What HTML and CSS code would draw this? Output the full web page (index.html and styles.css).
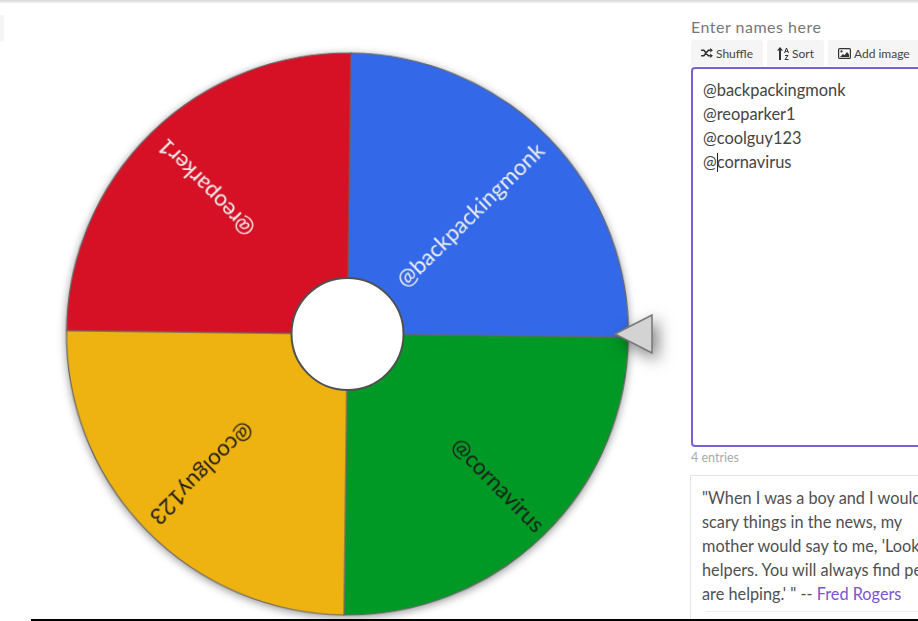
FILE: index.html

```html
<!DOCTYPE html>
<html lang="en">
<head>
  <meta charset="UTF-8" />
  <meta name="viewport" content="width=device-width, initial-scale=1.0"/>
  <title>Wheel of Names</title>
  <link rel="stylesheet" href="styles.css">
</head>
<body>
  <div class="top-bar"></div>

  <div class="main">
    <div class="wheel-column">
      <div class="side-tab"></div>

      <svg class="wheel" width="600" height="600" viewBox="0 0 600 600">
        <g class="wheel-disc" transform="translate(299.5 300) rotate(0.7)">
          <path class="slice" fill="#3369e8" d="M0 0V-281A281 281 0 0 1 281 0Z"/>
          <path class="slice" fill="#009925" d="M0 0H281A281 281 0 0 1 0 281Z"/>
          <path class="slice" fill="#eeb211" d="M0 0V281A281 281 0 0 1 -281 0Z"/>
          <path class="slice" fill="#d61126" d="M0 0H-281A281 281 0 0 1 0 -281Z"/>
          <text class="label label-light" transform="rotate(-45)" x="269" y="0">@backpackingmonk</text>
          <text class="label label-dark" transform="rotate(45)" x="274" y="-3">@cornavirus</text>
          <text class="label label-dark" transform="rotate(135)" x="269" y="1">@coolguy123</text>
          <text class="label label-light" transform="rotate(225)" x="267" y="0">@reoparker1</text>
        </g>
        <circle class="hub" cx="299.5" cy="300" r="56"/>
        <path class="pointer" d="M567 300L604 281V319Z"/>
      </svg>
    </div>

    <div class="names-column">
      <div class="names-title">Enter names here</div>

      <div class="toolbar">
        <div class="tool-btn">
          <svg class="tool-icon" width="12" height="10" viewBox="0 0 13 11">
            <path d="M0 2.5H3L8 8.5H10.5M0 8.5H3L8 2.5H10.5" fill="none" stroke="#333" stroke-width="1.8"/>
            <path d="M10 0L13 2.5L10 5ZM10 6L13 8.5L10 11Z" fill="#333"/>
          </svg>
          Shuffle
        </div>
        <div class="tool-btn">
          <svg class="tool-icon" width="12" height="13" viewBox="0 0 12 13">
            <path d="M3 0L6 3.6H4V13H2V3.6H0Z" fill="#333"/>
            <path d="M7.5 6L9.5 1L11.5 6M8.3 4.4H10.7M8 8.5H11L8 12.5H11.5" fill="none" stroke="#333"/>
          </svg>
          Sort
        </div>
        <div class="tool-btn">
          <svg class="tool-icon" width="13" height="11" viewBox="0 0 13 11">
            <rect x="0.6" y="0.6" width="11.8" height="9.8" rx="1" fill="none" stroke="#333" stroke-width="1.2"/>
            <circle cx="3.5" cy="3.4" r="1.1" fill="#333"/>
            <path d="M2 9L5 6L6.5 7.3L9 4L11 6.5V9Z" fill="#333"/>
          </svg>
          Add image
        </div>
      </div>

      <div class="names-input">
        <div>@backpackingmonk</div>
        <div>@reoparker1</div>
        <div>@coolguy123</div>
        <div>@<span class="caret"></span>cornavirus</div>
      </div>

      <div class="entry-count">4 entries</div>

      <div class="quote-box">
        <p class="quote">"When I was a boy and I would see<br>scary things in the news, my<br>mother would say to me, 'Look for the<br>helpers. You will always find people who<br>are helping.' " -- <a class="quote-link" href="#">Fred Rogers</a></p>
        <div class="quote-rule"></div>
      </div>
    </div>
  </div>

  <div class="bottom-bar"></div>
</body>
</html>
```

FILE: styles.css

```css
html, body {
  height: 100%;
}

body {
  margin: 0;
  display: flex;
  flex-direction: column;
  overflow: hidden;
  background-color: white;
  font-family: Lato, "Open Sans", Arial, sans-serif;
  color: #444;
}

.top-bar {
  height: 3px;
  flex-shrink: 0;
  background: linear-gradient(#d8d8d8, #f4f4f4);
}

.main {
  flex: 1;
  min-height: 0;
  display: flex;
  overflow: hidden;
}

.bottom-bar {
  height: 2px;
  flex-shrink: 0;
  margin-left: 31px;
  background-color: black;
}

/* Wheel */
.wheel-column {
  width: 691px;
  flex-shrink: 0;
  display: flex;
  align-items: flex-start;
}

.side-tab {
  width: 4px;
  height: 27px;
  margin-top: 12px;
  border-radius: 0 2px 2px 0;
  background-color: #f5f5f5;
}

.wheel {
  margin: 31px 0 0 44px;
  flex-shrink: 0;
  overflow: visible;
}

.wheel-disc {
  filter: drop-shadow(0 2px 4px rgba(0, 0, 0, 0.4));
}

.slice {
  stroke: #666;
  stroke-width: 1.2;
}

.label {
  font-family: Lato, sans-serif;
  font-size: 22.5px;
  text-anchor: end;
  dominant-baseline: central;
}

.label-light {
  fill: #f0f0f0;
}

.label-dark {
  fill: #1c1c1c;
}

.hub {
  fill: white;
  stroke: #505050;
  stroke-width: 2;
}

.pointer {
  fill: #d3d3d3;
  stroke: #777;
  stroke-width: 1.5;
  filter: drop-shadow(5px 6px 8px rgba(0, 0, 0, 0.5));
}

/* Names panel */
.names-column {
  width: 300px;
  flex-shrink: 0;
}

.names-title {
  margin-top: 13px;
  height: 24px;
  line-height: 22px;
  font-size: 16px;
  letter-spacing: 0.5px;
  color: #777;
}

.toolbar {
  display: flex;
  gap: 4px;
}

.tool-btn {
  height: 26px;
  padding: 0 10px;
  display: flex;
  align-items: center;
  gap: 3px;
  border-radius: 3px 3px 0 0;
  background-color: #f5f5f5;
  font-size: 12px;
  color: #444;
}

.names-input {
  width: 270px;
  height: 380px;
  margin-top: 1px;
  box-sizing: border-box;
  padding: 9px 10px;
  border: 2px solid #7b5fd6;
  border-radius: 4px;
  font-size: 16.4px;
  line-height: 24px;
  color: #444;
}

.caret {
  display: inline-block;
  width: 1px;
  height: 19px;
  margin-right: -1px;
  vertical-align: -4px;
  background-color: #222;
}

.entry-count {
  height: 21px;
  line-height: 21px;
  font-size: 12.5px;
  color: #aaa;
}

.quote-box {
  width: 270px;
  height: 160px;
  margin: 7px 0 0 -1px;
  padding: 10px 0 0 11px;
  border: 1px solid #e5e5e5;
}

.quote {
  margin: 0;
  white-space: nowrap;
  font-size: 16.3px;
  line-height: 24px;
  color: #505050;
}

.quote-link {
  color: #7b55d8;
  text-decoration: none;
}

.quote-rule {
  height: 1px;
  margin: 5px 0 0 4px;
  background-color: #eee;
}
```
